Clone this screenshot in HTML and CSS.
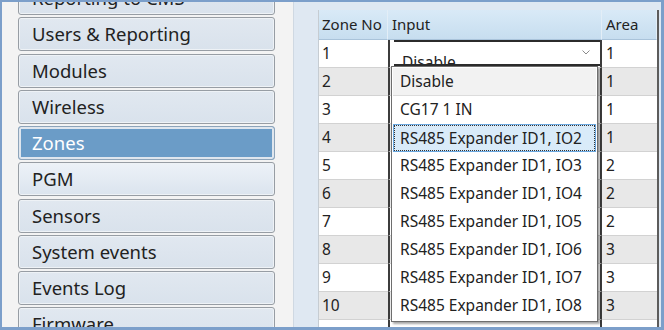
FILE: index.html
```html
<!DOCTYPE html>
<html lang="en">
<head>
  <meta charset="UTF-8" />
  <title>Zones</title>
  <link rel="stylesheet" href="styles.css">
</head>
<body>
  <div class="window">
    <nav class="sidebar">
      <ul class="menu">
        <li class="menu-item">Reporting to CMS</li>
        <li class="menu-item">Users &amp; Reporting</li>
        <li class="menu-item">Modules</li>
        <li class="menu-item">Wireless</li>
        <li class="menu-item active">Zones</li>
        <li class="menu-item hover">PGM</li>
        <li class="menu-item">Sensors</li>
        <li class="menu-item">System events</li>
        <li class="menu-item">Events Log</li>
        <li class="menu-item">Firmware</li>
      </ul>
    </nav>

    <main class="content">
      <div class="grid">
        <div class="row head">
          <div class="cell">Zone No</div>
          <div class="cell">Input</div>
          <div class="cell">Area</div>
        </div>
        <div class="row">
          <div class="cell">1</div>
          <div class="cell input">
            <div class="combo">
              <span>Disable</span>
              <svg class="chevron" width="8" height="5" viewBox="0 0 8 5"><polyline points="0.5,0.5 4,4 7.5,0.5" fill="none" stroke="#8a8a8a" stroke-width="1"/></svg>
            </div>
          </div>
          <div class="cell">1</div>
        </div>
        <div class="row"><div class="cell">2</div><div class="cell input"></div><div class="cell">1</div></div>
        <div class="row"><div class="cell">3</div><div class="cell input"></div><div class="cell">1</div></div>
        <div class="row"><div class="cell">4</div><div class="cell input"></div><div class="cell">1</div></div>
        <div class="row"><div class="cell">5</div><div class="cell input"></div><div class="cell">2</div></div>
        <div class="row"><div class="cell">6</div><div class="cell input"></div><div class="cell">2</div></div>
        <div class="row"><div class="cell">7</div><div class="cell input"></div><div class="cell">2</div></div>
        <div class="row"><div class="cell">8</div><div class="cell input"></div><div class="cell">3</div></div>
        <div class="row"><div class="cell">9</div><div class="cell input"></div><div class="cell">3</div></div>
        <div class="row"><div class="cell">10</div><div class="cell input"></div><div class="cell">3</div></div>
        <div class="row"><div class="cell">11</div><div class="cell input"></div><div class="cell">3</div></div>

        <ul class="popup">
          <li class="option selected">Disable</li>
          <li class="option">CG17 1 IN</li>
          <li class="option focused">RS485 Expander ID1, IO2</li>
          <li class="option">RS485 Expander ID1, IO3</li>
          <li class="option">RS485 Expander ID1, IO4</li>
          <li class="option">RS485 Expander ID1, IO5</li>
          <li class="option">RS485 Expander ID1, IO6</li>
          <li class="option">RS485 Expander ID1, IO7</li>
          <li class="option">RS485 Expander ID1, IO8</li>
        </ul>
      </div>
    </main>
  </div>
</body>
</html>
```

FILE: styles.css
```css
* {
  box-sizing: border-box;
}
body {
  margin: 0;
  font-family: "Noto Sans", sans-serif;
  color: #222;
  background: #fff;
}
.window {
  width: 664px;
  height: 330px;
  display: flex;
  overflow: hidden;
  border: solid #7c9fca;
  border-width: 2px 3px 3px 2px;
}

/* left menu */
.sidebar {
  width: 292px;
  flex: none;
  overflow: hidden;
  padding-left: 16px;
  background: #f3f3f3;
  border-right: 1px solid #cfd8e2;
}
.menu {
  list-style: none;
  margin: -21px 0 0;
  padding: 0;
}
.menu-item {
  width: 257px;
  height: 34px;
  margin-bottom: 2.25px;
  padding-left: 13px;
  font-size: 18.5px;
  line-height: 31px;
  color: #222;
  white-space: nowrap;
  border: 1px solid #979da4;
  border-radius: 3px;
  background: linear-gradient(#e1e8f0, #d9e2ec);
  box-shadow: inset 0 0 0 1px #eef2f6;
}
.menu-item.hover {
  background: linear-gradient(#edf2f8, #dbe4ee);
}
.menu-item.active {
  color: #fff;
  background: #6b9cc7;
  border-color: #8da4ba;
  box-shadow: inset 0 0 0 2px #dfe6ee;
}

/* grid */
.content {
  flex: 1;
  padding: 8px 0 0 24px;
  background: #dfe8f2;
}
.grid {
  position: relative;
  width: 341px;
  background: #fff;
  border-left: 1px solid #c6ccd2;
  border-right: 2px solid #5c5c5c;
}
.row {
  display: grid;
  grid-template-columns: 69px 214px 55px;
  height: 28px;
  font-size: 15.5px;
}
.row:nth-child(odd) {
  background: #e8e8e8;
}
.cell {
  padding-left: 4px;
  line-height: 27px;
  white-space: nowrap;
  overflow: hidden;
  border-bottom: 1px solid #d2d2d2;
}
.cell:first-child {
  padding-left: 3px;
}
.cell.input {
  border-left: 2px solid #3c3c3c;
  border-right: 2px solid #3c3c3c;
}
.row.head {
  height: 30px;
  font-size: 15px;
  background: linear-gradient(#d9eaf7, #c6ddef);
}
.row.head .cell {
  line-height: 29px;
  border-bottom: 1px solid #a9c3da;
  border-right: 1px solid #e3eef7;
}

/* open combo box */
.combo {
  position: relative;
  height: 26px;
  overflow: hidden;
  padding: 9px 0 0 8px;
  line-height: 22px;
  border-top: 2px solid #2b2b2b;
  border-bottom: 2px solid #2b2b2b;
  background: #fff;
}
.chevron {
  position: absolute;
  right: 10px;
  top: 8px;
}
.popup {
  position: absolute;
  left: 72px;
  top: 56px;
  width: 207px;
  height: 256px;
  margin: 0;
  padding: 1px 1px 0;
  list-style: none;
  background: #fff;
  border: 1px solid #6e6e6e;
  box-shadow: 2px 2px 2px rgba(0, 0, 0, 0.35);
}
.option {
  height: 28px;
  padding-left: 7px;
  font-size: 15.5px;
  line-height: 27px;
  white-space: nowrap;
}
.option.selected {
  background: #f2f2f2;
  border-bottom: 1px solid #dcdcdc;
}
.option.focused {
  background: #d9ebf9;
  border: 1px solid #6aa8e0;
  outline: 1px dotted #333;
  outline-offset: -2px;
  padding-left: 6px;
}
```
